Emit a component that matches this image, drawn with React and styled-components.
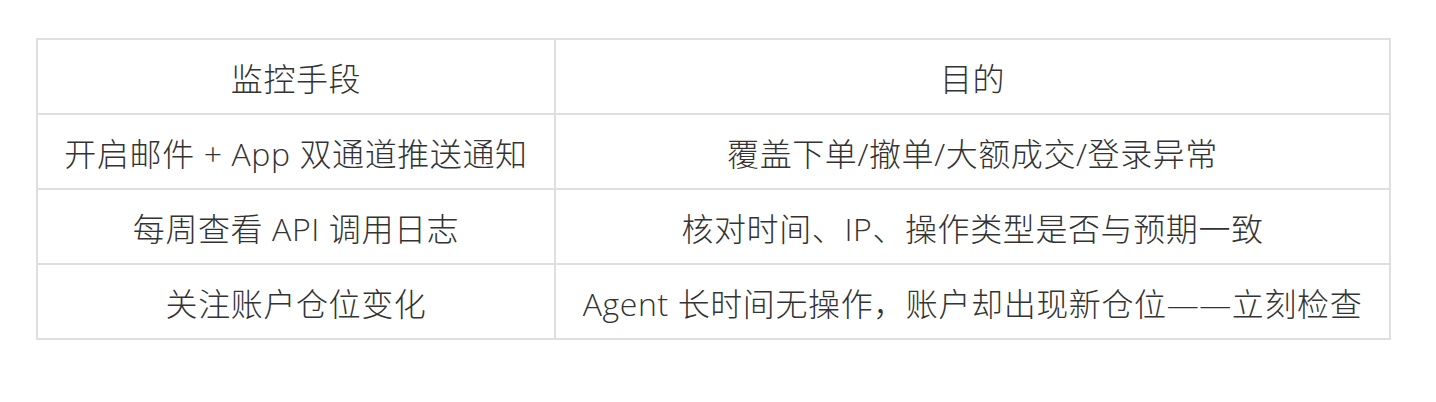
import React from "react";
import styled, { createGlobalStyle } from "styled-components";

const Global = createGlobalStyle`
  html, body { margin: 0; padding: 0; background: #fff; }
  body { font-family: "Open Sans", "Noto Sans CJK SC", sans-serif; color: #333; }
`;

const Page = styled.div`
  padding: 38px 0 0 36px;
`;

const Table = styled.table`
  border-collapse: collapse;
  width: 1353px;
  table-layout: fixed;
  font-family: "Open Sans", "Noto Sans CJK SC", sans-serif;
  font-size: 32px;
  letter-spacing: 0.6px;
  color: #333;
`;

const Col = styled.col`
  width: ${(p) => p.$w}px;
`;

const Cell = styled.td`
  border: 2px solid #dfdfdf;
  height: 73px;
  padding: 0 8px;
  text-align: center;
  vertical-align: middle;
  font-weight: 300;
  white-space: nowrap;
`;

const Head = styled(Cell).attrs({ as: "th" })``;

const rows = [
  ["开启邮件 + App 双通道推送通知", "覆盖下单/撤单/大额成交/登录异常"],
  ["每周查看 API 调用日志", "核对时间、IP、操作类型是否与预期一致"],
  ["关注账户仓位变化", "Agent 长时间无操作，账户却出现新仓位——立刻检查"],
];

export default function App() {
  return (
    <Page>
      <Global />
      <Table>
        <colgroup>
          <Col $w={518} />
          <Col $w={835} />
        </colgroup>
        <thead>
          <tr>
            <Head>监控手段</Head>
            <Head>目的</Head>
          </tr>
        </thead>
        <tbody>
          {rows.map((r, i) => (
            <tr key={i}>
              <Cell>{r[0]}</Cell>
              <Cell>{r[1]}</Cell>
            </tr>
          ))}
        </tbody>
      </Table>
    </Page>
  );
}
